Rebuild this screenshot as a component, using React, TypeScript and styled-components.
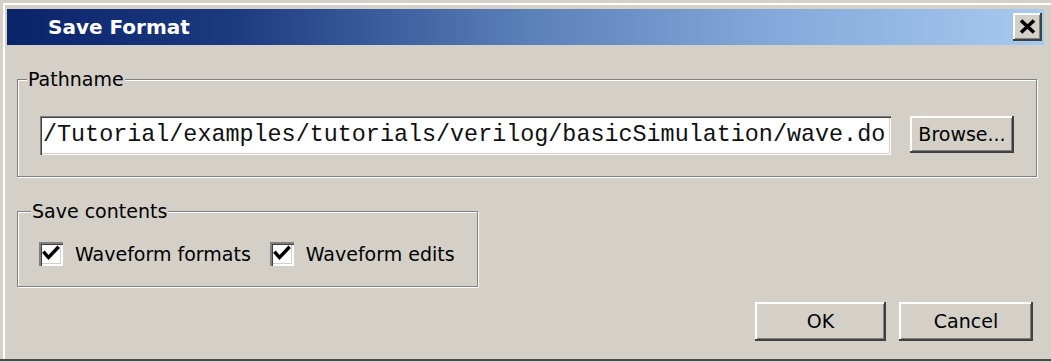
import React from "react";
import styled, { createGlobalStyle } from "styled-components";

const Global = createGlobalStyle`
  html, body { margin: 0; padding: 0; background: #d4d0c8; }
  body { font-family: "DejaVu Sans", Verdana, sans-serif; color: #000; }
  * { box-sizing: border-box; }
`;

const Window = styled.div`
  width: 1051px;
  height: 361px;
  background: #d4d0c8;
  padding: 9px 7px 0 7px;
  border-bottom: 2px solid #4a4a4a;
  box-shadow: inset 3px 3px 0 #d4d0c8, inset 5px 5px 0 #ffffff;
  display: flex;
  flex-direction: column;
`;

const TitleBar = styled.div`
  height: 36px;
  display: flex;
  align-items: center;
  justify-content: space-between;
  padding: 0 2px 0 41px;
  background: linear-gradient(to right, #0a246a 0%, #1c3a80 22%, #5a80b8 50%, #86aadb 75%, #a6caf0 100%);
`;

const Title = styled.span`
  color: #fff;
  font-weight: bold;
  font-size: 20px;
  line-height: 23px;
`;

const raised = `
  background: #d4d0c8;
  border: none;
  box-shadow: inset -2px -2px 0 #404040, inset 2px 2px 0 #ffffff, inset -3px -3px 0 #808080;
`;

const CloseButton = styled.button`
  ${raised}
  width: 29px;
  height: 28px;
  padding: 0 0 2px 0;
  display: flex;
  align-items: center;
  justify-content: center;
`;

const Content = styled.div`
  flex: 1;
  display: flex;
  flex-direction: column;
  padding: 23px 7px 0 10px;
`;

const Group = styled.fieldset<{ $fit?: boolean }>`
  margin: 0;
  min-width: 0;
  border: 1px solid #808080;
  box-shadow: inset 1px 1px 0 #ffffff, 1px 1px 0 #ffffff;
  padding: ${(p) => (p.$fit ? "20px 22px 20px 21px" : "26px 22px 21px 22px")};
  align-self: ${(p) => (p.$fit ? "flex-start" : "stretch")};
  & + & {
    margin-top: 23px;
  }
`;

const Legend = styled.legend<{ $offset: number }>`
  font-size: 19px;
  line-height: 22px;
  padding: 0 1px;
  margin-left: ${(p) => p.$offset}px;
  background: #d4d0c8;
`;

const PathRow = styled.div`
  display: flex;
  align-items: flex-start;
  gap: 19px;
`;

const PathInput = styled.div`
  flex: 1;
  height: 39px;
  background: #fff;
  box-shadow: inset 1px 1px 0 #808080, inset 2px 2px 0 #404040, inset -1px -1px 0 #ffffff, inset -2px -2px 0 #d4d0c8;
  font-family: "Liberation Mono", "Courier New", monospace;
  font-size: 23.4px;
  line-height: 39px;
  padding-left: 3px;
  white-space: nowrap;
  overflow: hidden;
  color: #111;
`;

const Button = styled.button<{ $w: number; $h: number }>`
  ${raised}
  width: ${(p) => p.$w}px;
  height: ${(p) => p.$h}px;
  font-family: "DejaVu Sans", Verdana, sans-serif;
  font-size: 19px;
  color: #000;
  padding: 0 0 1px 0;
  flex: none;
`;

const CheckRow = styled.div`
  display: flex;
  align-items: center;
`;

const CheckLabel = styled.label`
  display: flex;
  align-items: center;
  gap: 12px;
  font-size: 19px;
  line-height: 24px;
  & + & {
    margin-left: 19px;
  }
`;

const Box = styled.span`
  width: 24px;
  height: 24px;
  background: #fff;
  box-shadow: inset 2px 2px 0 #808080, inset 3px 3px 0 #404040, inset -2px -2px 0 #ffffff, inset -3px -3px 0 #d4d0c8;
  display: flex;
  align-items: center;
  justify-content: center;
`;

const ButtonRow = styled.div`
  display: flex;
  justify-content: flex-end;
  gap: 13px;
  margin-top: 15px;
  padding-right: 4px;
`;

const Check = () => (
  <Box>
    <svg width="24" height="24" viewBox="0 0 24 24">
      <polyline points="5.5,11 9.5,15.5 18.5,6" fill="none" stroke="#000" strokeWidth="3.4" strokeLinecap="square" />
    </svg>
  </Box>
);

export default function App() {
  return (
    <>
      <Global />
      <Window>
        <TitleBar>
          <Title>Save Format</Title>
          <CloseButton aria-label="Close">
            <svg width="17" height="15" viewBox="0 0 17 15">
              <path d="M2 1.5 L15 13.5 M15 1.5 L2 13.5" stroke="#000" strokeWidth="3.6" />
            </svg>
          </CloseButton>
        </TitleBar>
        <Content>
          <Group>
            <Legend $offset={-13}>Pathname</Legend>
            <PathRow>
              <PathInput>/Tutorial/examples/tutorials/verilog/basicSimulation/wave.do</PathInput>
              <Button $w={104} $h={37}>Browse...</Button>
            </PathRow>
          </Group>
          <Group $fit>
            <Legend $offset={-8}>Save contents</Legend>
            <CheckRow>
              <CheckLabel>
                <Check />
                Waveform formats
              </CheckLabel>
              <CheckLabel>
                <Check />
                Waveform edits
              </CheckLabel>
            </CheckRow>
          </Group>
          <ButtonRow>
            <Button $w={131} $h={39}>OK</Button>
            <Button $w={134} $h={39}>Cancel</Button>
          </ButtonRow>
        </Content>
      </Window>
    </>
  );
}
